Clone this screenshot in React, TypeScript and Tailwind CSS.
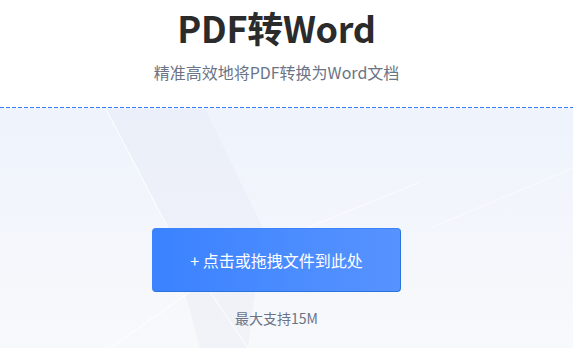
export default function App() {
  return (
    <div className="w-[573px] h-[348px] overflow-hidden bg-white font-['Noto_Sans_CJK_SC','Noto_Sans',sans-serif]">
      {/* Header */}
      <div className="h-[107px] flex flex-col items-center pr-[20px]">
        <h1 className="mt-[3px] text-[36px] leading-[48px] font-bold text-[#2b2b2b] tracking-[-0.3px]">PDF转Word</h1>
        <p className="mt-[10px] text-[16px] leading-[22px] text-[#6b7486]">精准高效地将PDF转换为Word文档</p>
      </div>
      <svg className="block" width="573" height="1" viewBox="0 0 573 1">
        <line x1="0" y1="0.5" x2="573" y2="0.5" stroke="#2f7cff" strokeWidth="1" strokeDasharray="4 2" />
      </svg>

      {/* Upload area */}
      <div className="relative h-[240px] bg-gradient-to-b from-[#eef3fc] to-[#f8f9fb] flex flex-col items-center pr-[20px]">
        <svg className="absolute inset-0" width="573" height="240" viewBox="0 0 573 240">
          <polygon points="106,1 205,1 263,120 248,240 200,240 168,120" fill="#e4e9f3" opacity="0.35" />
          <line x1="106" y1="1" x2="168" y2="120" stroke="#ffffff" strokeWidth="1.2" opacity="0.8" />
          <line x1="210" y1="184" x2="248" y2="240" stroke="#ffffff" strokeWidth="1.2" opacity="0.8" />
          <line x1="307" y1="120" x2="420" y2="74" stroke="#ffffff" strokeWidth="1.2" opacity="0.6" />
          <line x1="431" y1="120" x2="573" y2="60" stroke="#ffffff" strokeWidth="1.2" opacity="0.5" />
          <line x1="190" y1="184" x2="110" y2="240" stroke="#ffffff" strokeWidth="1.2" opacity="0.8" />
        </svg>
        <button className="relative mt-[120px] w-[249px] h-[64px] rounded-[4px] bg-gradient-to-r from-[#3a82ff] to-[#5793ff] border border-[#3a82ff] border-b-[#2a74e0] border-r-[#2a74e0] text-white text-[16px] flex items-center justify-center">
          + 点击或拖拽文件到此处
        </button>
        <p className="relative mt-[17px] text-[14px] leading-[18px] text-[#6b7486]">最大支持15M</p>
      </div>
    </div>
  );
}
